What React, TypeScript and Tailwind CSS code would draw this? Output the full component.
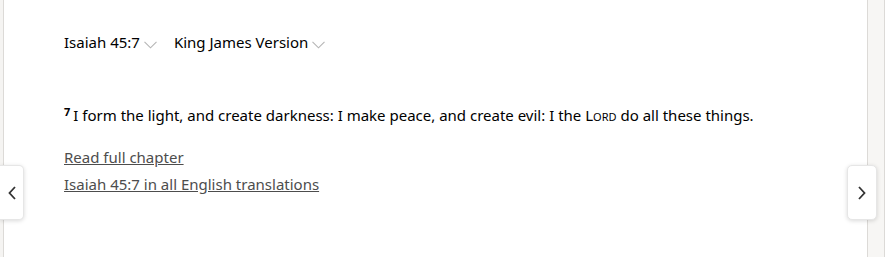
import React from "react";

function Chevron() {
  return (
    <svg width="13" height="8" viewBox="0 0 13 8" className="ml-[4px] mt-[5px]" fill="none">
      <path d="M0.5 0.8 L6.5 6.8 L12.5 0.8" stroke="#b5b5b5" strokeWidth="1.1" />
    </svg>
  );
}

export default function App() {
  return (
    <div
      className="relative flex h-[257px] w-[895px] bg-white text-black"
      style={{ fontFamily: '"Segoe UI", "Noto Sans", "Open Sans", sans-serif' }}
    >
      <div className="w-[4px] shrink-0 border-r border-[#dcdad7] bg-[#f5f4f2]" />
      <div className="flex-1 pl-[60px] pt-[31px]">
        <div className="flex items-center text-[15px] leading-[22px]">
          <span>Isaiah 45:7</span>
          <Chevron />
          <span className="ml-[17px]">King James Version</span>
          <Chevron />
        </div>
        <p className="mt-[51px] text-[15px] leading-[22px]">
          <sup className="mr-[3px] text-[11px] font-bold">7</sup>
          I form the light, and create darkness: I make peace, and create evil: I the{" "}
          <span className="uppercase">
            L<span className="text-[11px]">ord</span>
          </span>{" "}
          do all these things.
        </p>
        <div className="mt-[18px] flex flex-col gap-[5px] text-[15px] leading-[22px] text-[#4d4d4d]">
          <a href="#" className="w-fit underline">Read full chapter</a>
          <a href="#" className="w-fit underline">Isaiah 45:7 in all English translations</a>
        </div>
      </div>
      <div className="w-[18px] shrink-0 border-x border-[#dcdad7] bg-[#f7f6f4]" />
      <div className="w-[10px] shrink-0" />

      <button className="absolute left-0 top-[165px] flex h-[55px] w-[24px] items-center justify-center rounded-r-[5px] border border-l-0 border-[#e6e6e6] bg-white shadow-[0_1px_4px_rgba(0,0,0,0.15)]">
        <svg width="8" height="14" viewBox="0 0 8 14" fill="none">
          <path d="M7 1 L1.5 7 L7 13" stroke="#333" strokeWidth="1.8" />
        </svg>
      </button>
      <button className="absolute left-[847px] top-[165px] flex h-[55px] w-[30px] items-center justify-center rounded-[5px] border border-[#e6e6e6] bg-white shadow-[0_1px_4px_rgba(0,0,0,0.15)]">
        <svg width="8" height="14" viewBox="0 0 8 14" fill="none">
          <path d="M1 1 L6.5 7 L1 13" stroke="#333" strokeWidth="1.8" />
        </svg>
      </button>
    </div>
  );
}
